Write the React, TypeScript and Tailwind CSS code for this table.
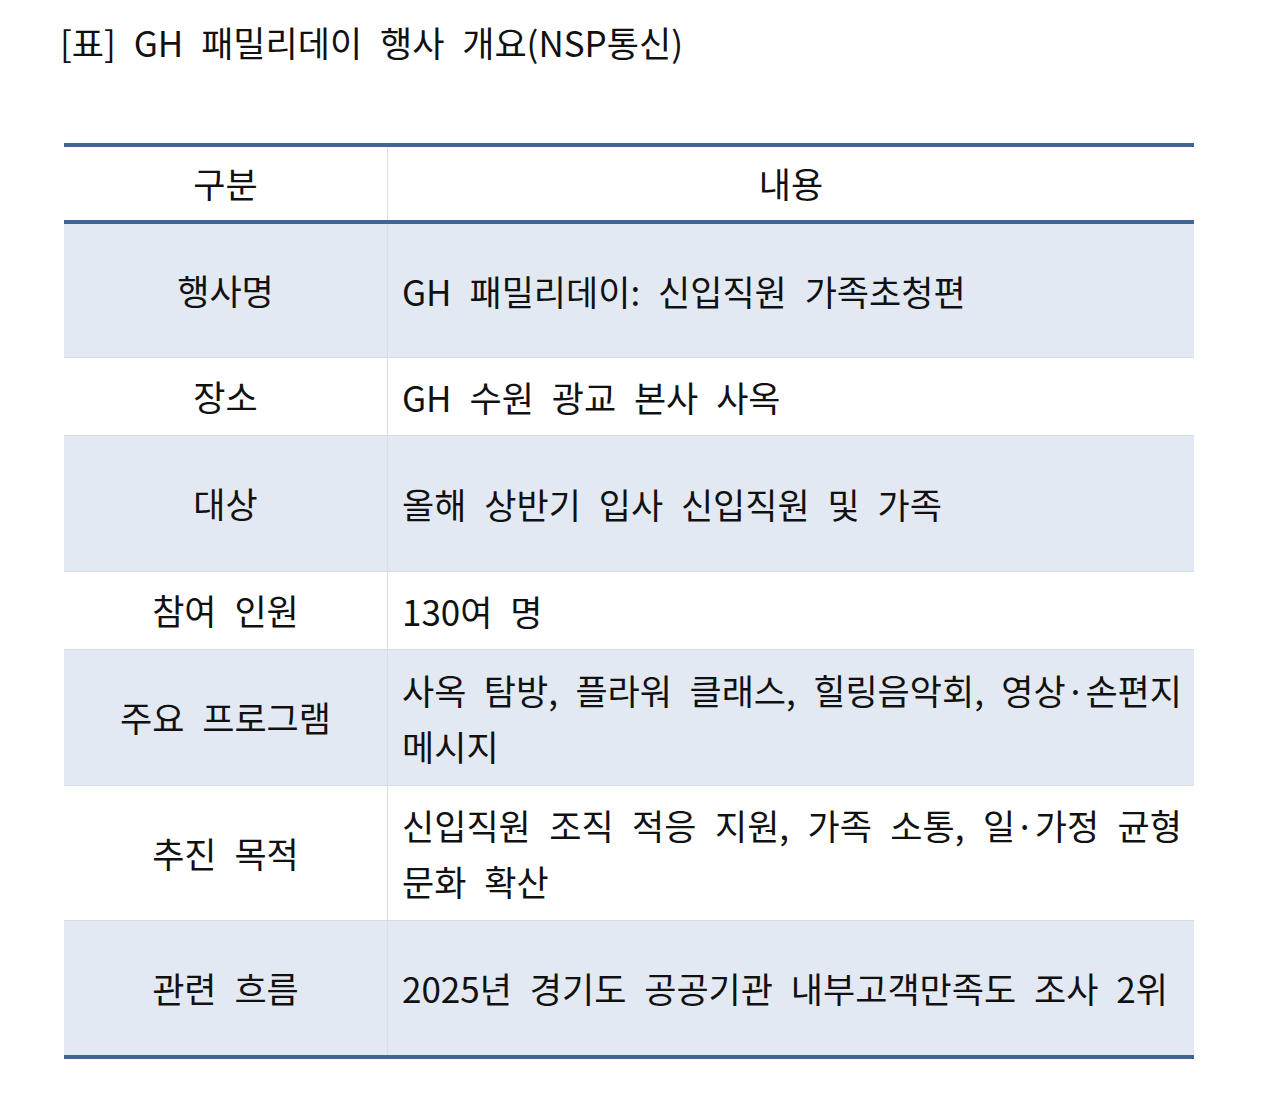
import React from "react";

type Row = {
  label: string;
  lines: string[];
  blue: boolean;
  h: string;
  last?: boolean;
};

const rows: Row[] = [
  { label: "행사명", lines: ["GH 패밀리데이: 신입직원 가족초청편"], blue: true, h: "h-[134px]" },
  { label: "장소", lines: ["GH 수원 광교 본사 사옥"], blue: false, h: "h-[78px]" },
  { label: "대상", lines: ["올해 상반기 입사 신입직원 및 가족"], blue: true, h: "h-[136px]" },
  { label: "참여 인원", lines: ["130여 명"], blue: false, h: "h-[78px]" },
  {
    label: "주요 프로그램",
    lines: ["사옥 탐방, 플라워 클래스, 힐링음악회, 영상·손편지", "메시지"],
    blue: true,
    h: "h-[136px]",
  },
  {
    label: "추진 목적",
    lines: ["신입직원 조직 적응 지원, 가족 소통, 일·가정 균형", "문화 확산"],
    blue: false,
    h: "h-[135px]",
  },
  {
    label: "관련 흐름",
    lines: ["2025년 경기도 공공기관 내부고객만족도 조사 2위"],
    blue: true,
    h: "h-[134px]",
    last: true,
  },
];

export default function App() {
  return (
    <div className="min-h-[1097px] w-[1280px] bg-white text-[#111] [font-family:'Noto_Sans_CJK_KR','Noto_Sans',sans-serif]">
      <div className="pl-[60px] pt-[22px]">
        <div className="h-[40px] whitespace-nowrap text-[35px] leading-[40px] [word-spacing:10px]">
          [표] GH 패밀리데이 행사 개요(NSP통신)
        </div>
        <div className="ml-[4px] mt-[81px] w-[1130px] border-t-[4px] border-b-[4px] border-[#3f6495]">
          <div className="grid h-[77px] grid-cols-[324px_1fr] border-b-[4px] border-[#3f6495] text-[35px]">
            <div className="flex items-center justify-center border-r border-[#dbe1e9]">구분</div>
            <div className="flex items-center justify-center">내용</div>
          </div>
          {rows.map((r, i) => (
            <div
              key={i}
              className={`grid grid-cols-[324px_1fr] text-[35px] ${r.h} ${
                r.blue ? "bg-[#e3e9f2]" : "bg-white"
              } ${r.last ? "" : "border-b border-[#d5dce6]"}`}
            >
              <div className="flex items-center justify-center border-r border-[#d7dee8] whitespace-nowrap [word-spacing:10px]">
                {r.label}
              </div>
              <div className="flex flex-col justify-center pl-[14px] pr-[12px]">
                {r.lines.map((l, j) => (
                  <div
                    key={j}
                    className={
                      r.lines.length > 1
                        ? j === 0
                          ? "whitespace-nowrap leading-[56px] text-justify [text-align-last:justify]"
                          : "leading-[56px] [word-spacing:10px]"
                        : "whitespace-nowrap leading-[40px] [word-spacing:10px]"
                    }
                  >
                    {l}
                  </div>
                ))}
              </div>
            </div>
          ))}
        </div>
      </div>
    </div>
  );
}
